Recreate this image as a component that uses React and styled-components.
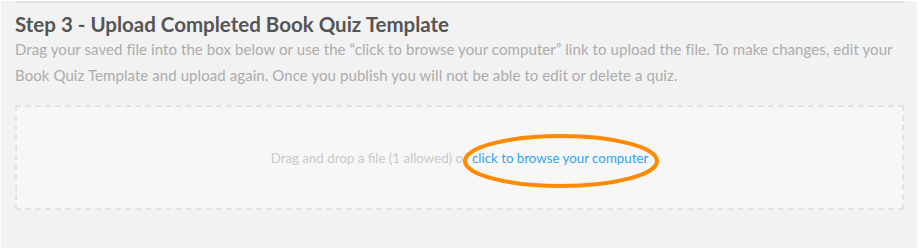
import React from "react";
import styled, { createGlobalStyle } from "styled-components";

const GlobalStyle = createGlobalStyle`
  html, body {
    margin: 0;
    padding: 0;
    background: #ffffff;
  }
  body {
    font-family: "Lato", "Liberation Sans", sans-serif;
  }
`;

const Panel = styled.div`
  margin-left: 1px;
  width: 916px;
  height: 248px;
  background: #f2f2f2;
  padding: 0 14px;
  box-sizing: border-box;
`;

const Divider = styled.div`
  margin-top: 1px;
  width: 889px;
  border-top: 2px solid #e2e2e2;
`;

const Heading = styled.h2`
  margin: 9px 0 0;
  font-size: 20.5px;
  line-height: 24px;
  font-weight: 700;
  color: #555555;
`;

const Intro = styled.p`
  margin: 0;
  width: 889px;
  font-size: 15px;
  letter-spacing: 0.08px;
  line-height: 26px;
  color: #acacac;
`;

const DropZone = styled.div`
  position: relative;
  margin-top: 17px;
  width: 889px;
  height: 105px;
  box-sizing: border-box;
  border: 2px dashed #e3e3e3;
  background: #f7f7f7;
  display: flex;
  align-items: center;
  justify-content: center;
  font-size: 13.3px;
  color: #c9c9c9;
`;

const BrowseLink = styled.a`
  color: #33a3f2;
  text-decoration: none;
  margin-left: 4px;
`;

const Circle = styled.svg`
  position: absolute;
  left: 446px;
  top: 27px;
  overflow: visible;
  pointer-events: none;
`;

export default function App() {
  return (
    <>
      <GlobalStyle />
      <Panel>
        <Divider />
        <Heading>Step 3 - Upload Completed Book Quiz Template</Heading>
        <Intro>
          Drag your saved file into the box below or use the “click to browse your computer” link to upload the
          file. To make changes, edit your Book Quiz Template and upload again. Once you publish you will not be
          able to edit or delete a quiz.
        </Intro>
        <DropZone>
          <span>Drag and drop a file (1 allowed) or</span>
          <BrowseLink href="#">click to browse your computer</BrowseLink>
          <Circle width="196" height="54" viewBox="0 0 196 54">
            <ellipse cx="98" cy="27" rx="96" ry="25" fill="none" stroke="#ff8a00" strokeWidth="4" />
          </Circle>
        </DropZone>
      </Panel>
    </>
  );
}
